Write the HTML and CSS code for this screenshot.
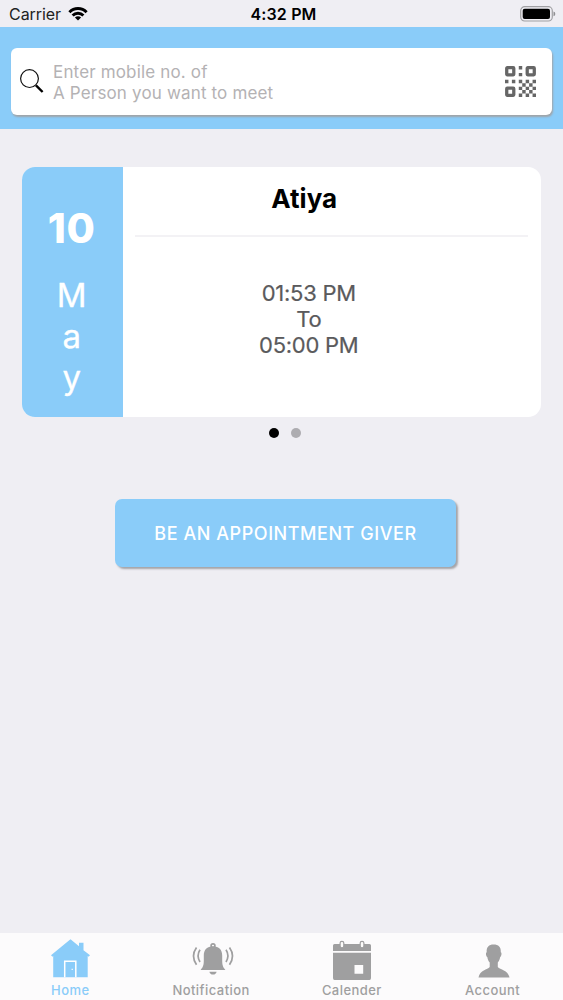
FILE: index.html
```html
<!DOCTYPE html>
<html lang="en">
<head>
<meta charset="utf-8">
<title>Appointments</title>
<link rel="stylesheet" href="styles.css">
</head>
<body>
<div class="screen">
  <div class="status">
    <div class="carrier"><span class="carrier-name">Carrier</span>
      <svg class="wifi" width="20" height="14" viewBox="0 0 20 14"><g fill="none" stroke="#000" stroke-width="2.9"><path d="M1.4 5.2C6.2.2 13.8.2 18.600 5.200"/><path d="M4.600 8.500C7.600 5.500 12.400 5.500 15.400 8.500"/></g><path d="M10 13.600L6.900 10.500Q10 8 13.100 10.500Z"/></svg>
    </div>
    <div class="clock">4:32 PM</div>
    <div class="battery"><svg width="36" height="16" viewBox="0 0 36 16"><rect x=".7" y=".7" width="31.600" height="14.300" rx="4" fill="none" stroke="#a0a0a3" stroke-width="1.200"/><rect x="2.700" y="2.700" width="27.300" height="10.300" rx="2"/><path d="M33.500 5.500Q35.300 6 35.300 7.900T33.500 10.300Z" fill="#8f8f92"/></svg></div>
  </div>
  <header class="header">
    <div class="search">
      <svg class="lens" width="24" height="25" viewBox="0 0 24 25"><circle cx="9.500" cy="9.600" r="8.900" fill="none" stroke="#111" stroke-width="1.200"/><path d="M16 16.300L22.600 23" stroke="#000" stroke-width="2.400"/></svg>
      <div class="hint">Enter mobile no. of<br>A Person you want to meet</div>
      <svg class="qr" width="31" height="31" viewBox="0 0 9 9"><g fill="none" stroke="#666" stroke-width=".95"><rect x=".5" y=".5" width="2.050" height="2.050" rx=".15"/><rect x="6.450" y=".5" width="2.050" height="2.050" rx=".15"/><rect x=".5" y="6.450" width="2.050" height="2.050" rx=".15"/></g><path fill="#666" d="M4 0h1v1h-1zM4 2h1v1h-1zM0 4h1v1h-1zM2 4h1v1h-1zM4 4h1v1h-1zM6 4h1v1h-1zM8 4h1v1h-1zM5 5h1v1h-1zM7 5h1v1h-1zM4 6h1v1h-1zM6 6h1v1h-1zM8 6h1v1h-1zM5 7h1v1h-1zM7 7h1v1h-1zM4 8h1v1h-1zM6 8h1v1h-1zM8 8h1v1h-1z"/></svg>
    </div>
  </header>
  <main class="main">
    <section class="card">
      <div class="date"><div class="day">10</div><div class="month"><span>M</span><span>a</span><span>y</span></div></div>
      <div class="detail">
        <div class="name">Atiya</div>
        <div class="times"><span>01:53 PM</span><span>To</span><span>05:00 PM</span></div>
      </div>
    </section>
    <div class="dots"><i class="dot on"></i><i class="dot"></i></div>
    <button class="giver">BE AN APPOINTMENT GIVER</button>
  </main>
  <nav class="tabs">
    <div class="tab active">
      <svg width="40" height="40" viewBox="-.5 -.3 40 40"><path fill="currentColor" d="M20 1L28.500 8V4.500H33V12L39.500 17L38 18.500L37.200 17.600V39H2.700V17.600L2 18.500L.5 17Z"/><path d="M14.200 39V23H25.300V39" fill="none" stroke="#fff" stroke-width="1.500"/><path d="M21 31h1.500" stroke="#fff"/></svg>
      <span>Home</span>
    </div>
    <div class="tab">
      <svg class="bell" width="42" height="40" viewBox="0 -.5 42 40"><g fill="none" stroke="currentColor" stroke-width="1.700"><circle cx="21" cy="7.200" r="1.900"/><path d="M8 11.200Q4.200 17 8 23.500M4.500 9Q-1.500 17.500 4.500 26.300M34 11.200Q37.800 17 34 23.500M37.500 9Q43.500 17.500 37.500 26.300"/></g><path fill="currentColor" d="M21 7.800C27 7.800 30.200 11.500 30.200 17V22C30.200 26.500 31 28.600 33.400 31.400H8.600C11 28.600 11.800 26.500 11.800 22V17C11.800 11.500 15 7.800 21 7.800ZM17.400 33.200H24.600Q24 36 21 36T17.400 33.200Z"/></svg>
      <span>Notification</span>
    </div>
    <div class="tab">
      <svg width="40" height="40" viewBox="0 0 40 40"><path fill="currentColor" fill-rule="evenodd" d="M2.500 6H37.500Q39 6 39 7.500V13H1V7.500Q1 6 2.500 6ZM1 14.700H39V40Q39 42 37.500 42H2.500Q1 42 1 40ZM22.500 27V35.700H31.200V27Z"/><g fill="#fdfcfb" stroke="currentColor" stroke-width="1.200"><rect x="8.100" y="3.300" width="3.700" height="6.500" rx="1.800"/><rect x="28.200" y="3.300" width="3.700" height="6.500" rx="1.800"/></g></svg>
      <span>Calender</span>
    </div>
    <div class="tab">
      <svg width="40" height="40" viewBox="0 0 40 40"><path fill="currentColor" d="M20.500 6.500C25.500 6.500 28.200 9 27.800 14.300C29 14.600 28.600 18.500 27.200 19.100C26.800 21.800 25.800 23.300 24.800 24.500V29C27 32 35 31.500 36.500 39.500H5.500C7 31.500 14.500 32 16.700 29V24.500C15.500 23.300 14.700 21.800 14.300 19.100C12.900 18.500 12.500 14.600 13.700 14.300C13.200 9 16 6.500 20.500 6.500Z"/></svg>
      <span>Account</span>
    </div>
  </nav>
</div>
</body>
</html>
```
FILE: styles.css
```css
* { box-sizing: border-box; }
body { margin: 0; font-family: Inter, "Liberation Sans", sans-serif; }
.screen { width: 563px; height: 1000px; display: flex; flex-direction: column; background: #efeef3; overflow: hidden; }
.status { height: 27px; display: grid; grid-template-columns: 1fr auto 1fr; align-items: center; padding: 1px 7px 0 9px; font-size: 16px; }
.carrier { display: flex; align-items: center; gap: 7px; color: #222; }
.carrier-name { letter-spacing: -.05px; }
.clock { font-weight: 600; letter-spacing: .15px; padding-left: 2px; }
.battery { display: flex; justify-content: flex-end; }
.header { height: 102px; background: #8accf9; padding: 21px 11px 0; }
.search { height: 67px; background: #fff; border-radius: 6px; box-shadow: 1px 2px 2px #a0a4a8; display: flex; align-items: center; padding: 0 16px 0 9px; }
.lens { flex: none; }
.hint { flex: 1; margin-left: 9px; padding-top: 3px; font-size: 17px; line-height: 21px; letter-spacing: .16px; color: #b4b2b4; white-space: nowrap; }
.qr { flex: none; }
.main { flex: 1; display: flex; flex-direction: column; align-items: center; padding-top: 38px; }
.card { width: 519px; height: 250px; background: #fff; border-radius: 13px; overflow: hidden; display: flex; }
.date { width: 100.500px; background: #8accf9; color: #fff; display: flex; flex-direction: column; align-items: center; padding-top: 36px; }
.day { font-size: 41px; line-height: 51px; font-weight: 800; letter-spacing: .8px; margin-left: -1px; }
.month { display: flex; flex-direction: column; align-items: center; margin: 21px 1px 0 0; font-size: 33px; line-height: 41px; -webkit-text-stroke: .3px #fff; }
.detail { flex: 1; padding: 0 13px 0 12px; text-align: center; }
.name { height: 70px; border-bottom: 2px solid #f3f2f5; padding-top: 16px; padding-right: 54px; font-size: 26px; line-height: 32px; font-weight: 700; }
.times { display: flex; flex-direction: column; padding: 43px 45px 0 0; font-size: 22px; line-height: 26px; letter-spacing: -.25px; color: #5a5a5c; -webkit-text-stroke: .2px #5a5a5c; }
.dots { display: flex; gap: 12px; margin: 11px 0 0 7px; }
.dot { width: 10px; height: 10px; border-radius: 50%; background: #adacb0; }
.dot.on { background: #000; }
.giver { width: 341px; height: 68px; margin: 61px 0 0 8px; padding: 1px 0 0; border: 0; border-radius: 7px; background: #8accf9; box-shadow: 2px 2px 2px #a4a4a8; color: #fff; font: 500 18px/67px Inter, "Liberation Sans", sans-serif; letter-spacing: .55px; }
.tabs { height: 67px; background: #fcfbfc; display: grid; grid-template-columns: repeat(4, 1fr); color: #9f9fa0; }
.tab { display: flex; flex-direction: column; align-items: center; padding-top: 5px; font-size: 13px; font-weight: 500; line-height: 16px; letter-spacing: .45px; }
.tab svg { overflow: visible; }
.bell { margin-left: 3px; }
.tab span { margin-top: 4px; }
.tab.active { color: #8accf9; }
```
